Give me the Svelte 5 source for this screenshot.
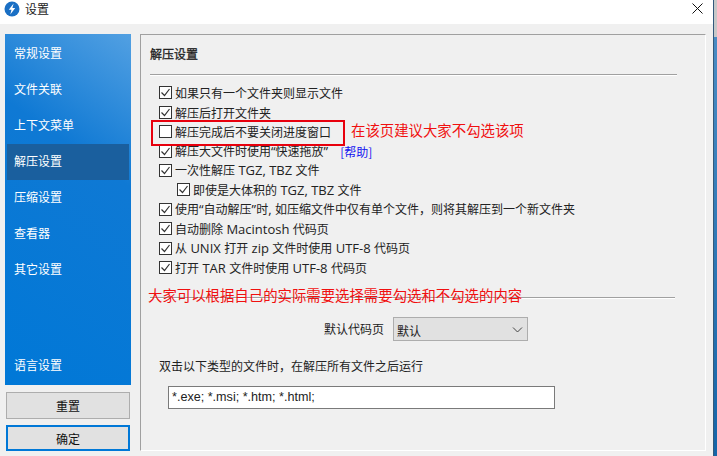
<script>
	const nav = ['常规设置', '文件关联', '上下文菜单', '解压设置', '压缩设置', '查看器', '其它设置'];
	const active = '解压设置';

	const options = [
		{ label: '如果只有一个文件夹则显示文件', checked: true },
		{ label: '解压后打开文件夹', checked: true },
		{ label: '解压完成后不要关闭进度窗口', checked: false },
		{ label: '解压大文件时使用“快速拖放”', checked: true, help: true },
		{ label: '一次性解压 TGZ, TBZ 文件', checked: true },
		{ label: '即使是大体积的 TGZ, TBZ 文件', checked: true, sub: true },
		{ label: '使用“自动解压”时, 如压缩文件中仅有单个文件，则将其解压到一个新文件夹', checked: true },
		{ label: '自动删除 Macintosh 代码页', checked: true },
		{ label: '从 UNIX 打开 zip 文件时使用 UTF-8 代码页', checked: true },
		{ label: '打开 TAR 文件时使用 UTF-8 代码页', checked: true }
	];

	// latin runs are set bigger than the cjk ones, like the original ui font
	function split(text) {
		return text.split(/([A-Za-z0-9,\- “”]+)/).filter(Boolean).map((t) => ({
			text: t,
			latin: /^[A-Za-z0-9,\- “”]+$/.test(t)
		}));
	}
</script>

<div class="window">
	<header class="titlebar">
		<svg class="logo" width="16" height="16" viewBox="0 0 16 16">
			<circle cx="8" cy="8" r="7.5" fill="#1a6fc4" />
			<path d="M9.6 2.6 4.8 8.8h2.7L6.3 13.4l4.9-6.3H8.4z" fill="#fff" />
		</svg>
		<span class="title">设置</span>
		<svg class="close" width="11" height="11" viewBox="0 0 11 11">
			<path d="M.5.5l10 10M10.5.5l-10 10" stroke="#111" stroke-width="1" fill="none" />
		</svg>
	</header>

	<div class="body">
		<aside class="side">
			<nav class="nav">
				{#each nav as item}
					<div class="nav-item" class:active={item === active}>{item}</div>
				{/each}
				<div class="nav-item lang">语言设置</div>
			</nav>
			<button class="btn">重置</button>
			<button class="btn primary">确定</button>
		</aside>

		<main class="panel">
			<h2 class="heading">解压设置</h2>
			<div class="rule"></div>

			<div class="options">
				{#each options as opt}
					<div class="option" class:sub={opt.sub}>
						<span class="box">
							{#if opt.checked}
								<svg width="13" height="13" viewBox="0 0 13 13">
									<path d="M2.5 6.5l3 3 5-6.5" stroke="#333" stroke-width="1.2" fill="none" />
								</svg>
							{/if}
						</span>
						<span class="label">{#each split(opt.label) as part}<span class:latin={part.latin}>{part.text}</span>{/each}</span>
						{#if opt.help}<span class="help">[帮助]</span>{/if}
					</div>
				{/each}
			</div>

			<div class="rule second"></div>

			<div class="codepage">
				<span class="codepage-label">默认代码页</span>
				<div class="select">
					<span>默认</span>
					<svg width="11" height="6" viewBox="0 0 11 6">
						<path d="M1 .5l4.5 4.5L10 .5" stroke="#444" fill="none" />
					</svg>
				</div>
			</div>

			<p class="run-label">双击以下类型的文件时，在解压所有文件之后运行</p>
			<div class="input">*.exe; *.msi; *.htm; *.html;</div>

			<div class="mark-box"></div>
			<div class="note note-top">在该页建议大家不勾选该项</div>
			<div class="note note-bottom">大家可以根据自己的实际需要选择需要勾选和不勾选的内容</div>
		</main>

		<div class="edge"></div>
	</div>
</div>

<style>
	:global(body) {
		margin: 0;
		background: #f0f0f0;
	}
	.window {
		width: 717px;
		height: 456px;
		overflow: hidden;
		position: relative;
		font-family: "Noto Sans CJK SC", "Liberation Sans", sans-serif;
		font-size: 12px;
		color: #222;
		background: #f0f0f0;
	}
	.titlebar {
		height: 24px;
		box-sizing: border-box;
		background: #fff;
		display: flex;
		align-items: flex-start;
		padding: 1px 12px 0 4px;
		margin-right: 4px;
	}
	.logo {
		margin-right: 5px;
	}
	.title {
		font-size: 12px;
		line-height: 15px;
		flex: 1;
	}
	.close {
		margin: 2px -2px 0 0;
	}
	.body {
		display: flex;
		height: 432px;
		box-sizing: border-box;
		padding: 10px 0 5px 5px;
	}
	.side {
		width: 126px;
		margin-right: 9px;
		display: flex;
		flex-direction: column;
	}
	.nav {
		height: 351px;
		background: linear-gradient(215deg, #52a0e2 0%, #0f79d4 35%, #0078d7 100%);
		display: flex;
		flex-direction: column;
		padding: 2px;
		box-sizing: border-box;
		margin-bottom: 7px;
	}
	.nav-item {
		height: 36px;
		flex: none;
		line-height: 34px;
		padding-left: 7px;
		color: #fff;
		font-size: 12px;
	}
	.nav-item.active {
		background: #1a5f9e;
	}
	.lang {
		margin-top: auto;
		margin-bottom: -1px;
	}
	.btn {
		width: 124px;
		height: 27px;
		margin: 0 1px 6px;
		flex: none;
		background: #e1e1e1;
		border: 1px solid #adadad;
		font: inherit;
		color: #111;
		padding: 0;
	}
	.primary {
		height: 26px;
		border: 2px solid #0078d7;
		margin-bottom: 0;
	}
	.panel {
		position: relative;
		width: 566px;
		flex: none;
		box-sizing: border-box;
		border: 1px solid #a0a0a0;
		border-right: 1px solid #fff;
		border-bottom: 1px solid #fff;
		padding: 0 0 0 9px;
	}
	.heading {
		margin: 0;
		font-size: 12px;
		font-weight: 400;
		-webkit-text-stroke: 0.3px #222;
		height: 39px;
		line-height: 38px;
	}
	.rule {
		height: 1px;
		width: 527px;
		background: #a0a0a0;
		border-bottom: 1px solid #fff;
	}
	.options {
		margin-top: 7px;
		padding-left: 9px;
	}
	.option {
		height: 19.45px;
		display: flex;
		align-items: center;
	}
	.option.sub {
		padding-left: 18px;
	}
	.box {
		width: 13px;
		height: 13px;
		box-sizing: border-box;
		border: 1px solid #333;
		background: #fff;
		margin-right: 3px;
		flex: none;
		display: flex;
		align-items: center;
		justify-content: center;
	}
	.box svg {
		margin: -1px;
		flex: none;
	}
	.label {
		white-space: nowrap;
	}
	.latin {
		font-family: "Open Sans", "Liberation Sans", sans-serif;
		font-size: 13px;
		white-space: pre;
	}
	.help {
		color: #1414f0;
		margin-left: 12px;
	}
	.second {
		margin-top: 20px;
		width: 525px;
	}
	.codepage {
		display: flex;
		align-items: center;
		margin-top: 18px;
		padding-left: 174px;
		height: 24px;
	}
	.codepage-label {
		padding-bottom: 2px;
	}
	.select {
		margin-left: 9px;
		width: 135px;
		height: 24px;
		box-sizing: border-box;
		background: #e1e1e1;
		border: 1px solid #adadad;
		display: flex;
		align-items: center;
		justify-content: space-between;
		padding: 2px 4px 0 3px;
	}
	.run-label {
		margin: 16px 0 0 9px;
		height: 17px;
		line-height: 17px;
	}
	.input {
		margin: 12px 0 0 18px;
		width: 387px;
		height: 23px;
		box-sizing: border-box;
		border: 1px solid #7a7a7a;
		background: #fff;
		padding-left: 3px;
		line-height: 21px;
		font-family: "Liberation Sans", sans-serif;
		font-size: 12.6px;
	}
	.mark-box {
		position: absolute;
		left: 10px;
		top: 85px;
		width: 194px;
		height: 26px;
		box-sizing: border-box;
		border: 2px solid #e8000d;
	}
	.note {
		position: absolute;
		color: #f01010;
		white-space: nowrap;
		font-size: 14.4px;
	}
	.note-top {
		left: 210px;
		top: 84px;
	}
	.note-bottom {
		left: 7px;
		top: 249px;
	}
	.edge {
		position: absolute;
		right: 0;
		top: 0;
		width: 4px;
		height: 456px;
		background: linear-gradient(#c8c8c8 0, #c8c8c8 37px, #4a8cc4 37px, #1565a8 100%);
		border-left: 1px solid #33597c;
		box-sizing: border-box;
	}
</style>
